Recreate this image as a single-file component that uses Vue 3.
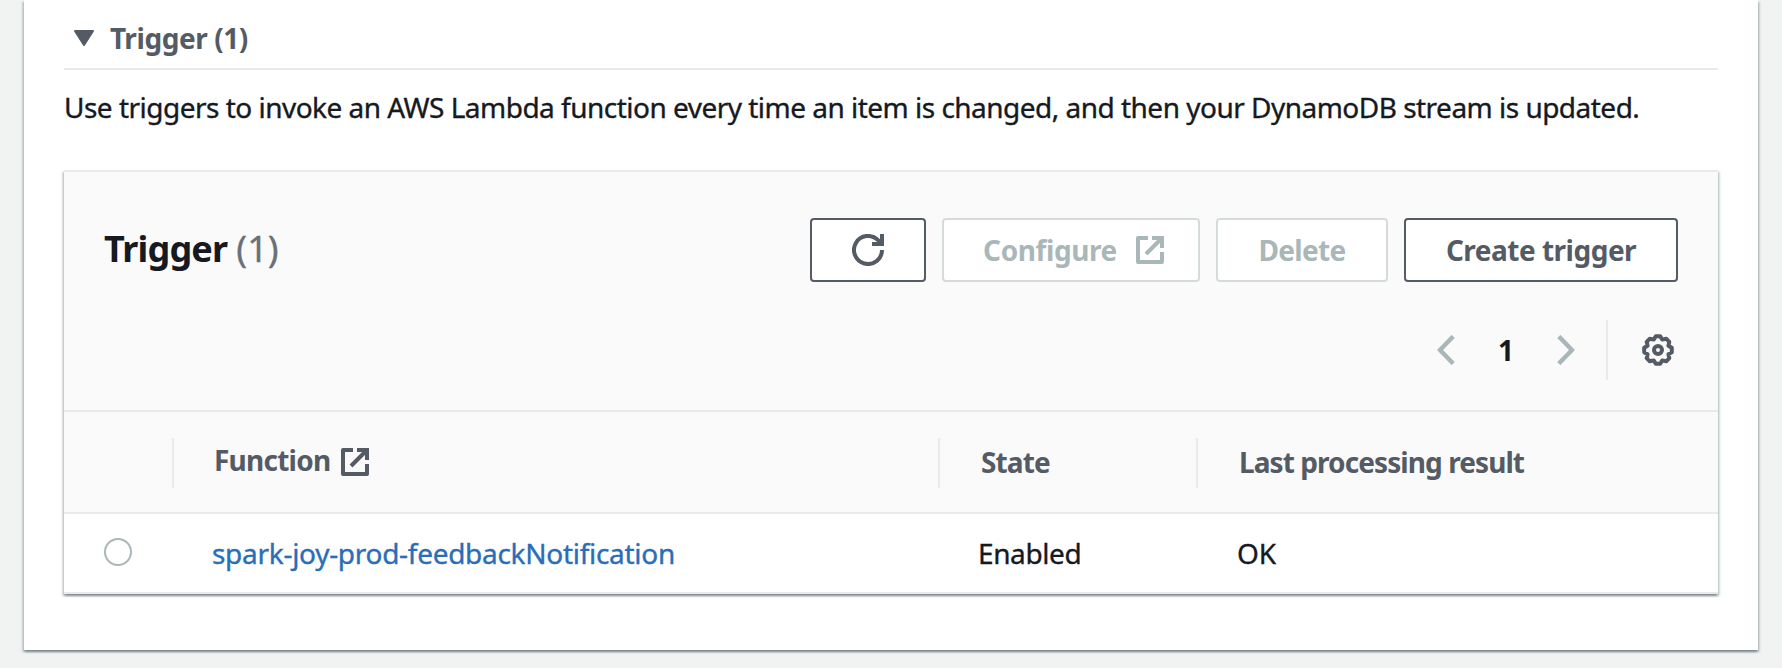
<script setup>
const columns = [
  { key: 'function', label: 'Function', external: true },
  { key: 'state', label: 'State' },
  { key: 'result', label: 'Last processing result' },
]
const rows = [{ function: 'spark-joy-prod-feedbackNotification', state: 'Enabled', result: 'OK' }]
</script>

<template>
  <main class="page">
    <section class="panel">
      <header class="expander">
        <svg class="caret" viewBox="0 0 20 16"><path d="M1 1h18L10 15z" fill="currentColor" stroke="currentColor" stroke-width="2" stroke-linejoin="round" /></svg>
        <span class="t-expander">Trigger (1)</span>
      </header>
      <p class="intro"><span class="t-intro">Use triggers to invoke an AWS Lambda function every time an item is changed, and then your DynamoDB stream is updated.</span></p>

      <div class="card">
        <div class="card-head">
          <div class="toolbar">
            <h2><span class="t-title">Trigger</span><span class="count">(1)</span></h2>
            <button class="btn refresh" aria-label="Refresh">
              <svg class="i32" viewBox="0 0 16 16" fill="none" stroke="currentColor" stroke-width="2"><path d="M15 8a7 7 0 1 1-2-4.9L14.8 5" /><path d="M10 5h5V0" /></svg>
            </button>
            <button class="btn configure" disabled>
              <span class="t-configure">Configure</span>
              <svg class="i28" viewBox="0 0 28 28" fill="none" stroke="currentColor" stroke-width="4"><path d="M12 2H2v24h24V16" stroke-linejoin="round" /><path d="M16 2h10v10" /><path d="M25 3L10 18" /></svg>
            </button>
            <button class="btn delete" disabled><span class="t-delete">Delete</span></button>
            <button class="btn create"><span class="t-create">Create trigger</span></button>
          </div>
          <div class="paging">
            <svg class="chev" viewBox="0 0 18 30" fill="none" stroke="currentColor" stroke-width="4.4"><path d="M16.2 1.4L3 15l13.2 13.6" /></svg>
            <span class="page-no">1</span>
            <svg class="chev" viewBox="0 0 18 30" fill="none" stroke="currentColor" stroke-width="4.4"><path d="M1.8 1.4L15 15 1.8 28.6" /></svg>
            <span class="rule"></span>
            <svg class="i32 gear" viewBox="-16 -16 32 32" fill="none" stroke="currentColor" stroke-width="4" stroke-linejoin="round"><path d="M-2.2 -13.8H2.2L4.2 -10.4 8.2 -11.3 11.3 -8.2 10.4 -4.2 13.8 -2.2V2.2L10.4 4.2 11.3 8.2 8.2 11.3 4.2 10.4 2.2 13.8H-2.2L-4.2 10.4 -8.2 11.3 -11.3 8.2 -10.4 4.2 -13.8 2.2V-2.2L-10.4 -4.2 -11.3 -8.2 -8.2 -11.3 -4.2 -10.4z" /><circle r="4" /></svg>
          </div>
        </div>
        <div class="grid thead">
          <div class="cell"></div>
          <div v-for="c in columns" :key="c.key" class="cell" :class="'h-' + c.key">
            <span>{{ c.label }}</span>
            <svg v-if="c.external" class="i28" viewBox="0 0 28 28" fill="none" stroke="currentColor" stroke-width="4"><path d="M12 2H2v24h24V16" stroke-linejoin="round" /><path d="M16 2h10v10" /><path d="M25 3L10 18" /></svg>
          </div>
        </div>
        <div v-for="r in rows" :key="r.function" class="grid row">
          <div class="cell pick"><span class="radio"></span></div>
          <div class="cell"><a class="t-link">{{ r.function }}</a></div>
          <div class="cell"><span class="t-state">{{ r.state }}</span></div>
          <div class="cell"><span class="t-ok">{{ r.result }}</span></div>
        </div>
      </div>
    </section>
  </main>
</template>

<style>
body { background: #f1f3f3; }
</style>
<style scoped>
* { box-sizing: border-box; }
.page { height: 668px; overflow: hidden; padding: 0 24px; background: #f1f3f3; font: 28px/38px "Noto Sans", sans-serif; color: #16191f; }
.panel { height: 650px; padding: 0 40px; background: #fff; box-shadow: 0 2px 2px rgba(0,28,36,.3), 2px 2px 2px rgba(0,28,36,.15), -2px 2px 2px rgba(0,28,36,.15); }
span, a { white-space: nowrap; }
.expander { height: 70px; padding: 6px 0 0 10px; display: flex; align-items: center; border-bottom: 2px solid #eaeaea; color: #545b64; font-weight: 700; }
.caret { width: 20px; height: 16px; margin: 2px 16px 0 0; }
.t-expander { letter-spacing: -.42px; margin-top: 1px; }
.intro { margin: 0 0 26px; line-height: 74px; height: 74px; }
.t-intro { letter-spacing: -.515px; }
.t-intro, .t-link, .t-state, .t-ok, .count { -webkit-text-stroke: .35px currentColor; }
.card { background: #fff; box-shadow: 0 2px 2px rgba(0,28,36,.3), 2px 2px 2px rgba(0,28,36,.15), -2px 2px 2px rgba(0,28,36,.15); border-top: 2px solid #eaeaea; }
.card-head { height: 240px; padding: 46px 40px 0; background: #fafafa; border-bottom: 2px solid #eaeaea; }
.toolbar { display: flex; gap: 16px; height: 64px; }
h2 { flex: 1; margin: 0; font-size: 36px; line-height: 62px; font-weight: 700; }
.t-title { letter-spacing: -.8px; }
.count { margin-left: 9px; font-weight: 400; color: #687078; }
.btn { display: flex; align-items: center; justify-content: center; height: 64px; padding: 0; margin: 0; border: 2px solid #545b64; border-radius: 4px; background: #fff; color: #545b64; font: 700 28px/38px "Noto Sans", sans-serif; }
.btn:disabled { color: #aab7b8; border-color: #d5dbdb; }
.refresh { width: 116px; }
.configure { width: 258px; gap: 19px; padding-left: 5px; }
.t-configure { letter-spacing: -.4px; }
.delete { width: 172px; }
.t-delete { letter-spacing: -.65px; }
.create { width: 274px; }
.t-create { letter-spacing: -.5px; }
svg { display: block; flex: none; }
.i32 { width: 32px; height: 32px; }
.i28 { width: 28px; height: 28px; }
.paging { display: flex; align-items: center; justify-content: flex-end; height: 60px; margin-top: 38px; padding-right: 4px; }
.chev { width: 18px; height: 30px; color: #aab7b8; }
.page-no { width: 102px; text-align: center; font-weight: 700; height: 40px; line-height: 40px; }
.rule { width: 2px; height: 60px; margin: 0 34px 0 31px; background: #eaeaea; }
.gear { color: #545b64; }
.grid { display: grid; grid-template-columns: 110px 766px 258px 1fr; align-items: center; border-bottom: 2px solid #eaeaea; }
.thead { height: 102px; padding-top: 2px; background: #fafafa; color: #545b64; font-weight: 700; }
.thead .cell { height: 50px; padding: 0 0 2px 41px; display: flex; align-items: center; border-right: 2px solid #eaeaea; }
.thead .cell:last-child { border-right: 0; }
.thead .h-function { padding-left: 40px; }
.thead .h-function span { margin: -4px 11px 0 0; letter-spacing: -.75px; }
.h-state span { letter-spacing: -.9px; }
.h-result span { letter-spacing: -.92px; }
.row { height: 80px; }
.row .cell { padding-left: 38px; }
.radio { display: block; width: 28px; height: 28px; border: 2px solid #aab7b8; border-radius: 50%; margin: -2px 0 0 2px; }
.t-link { color: #2a6db8; letter-spacing: -.29px; }
.t-state { letter-spacing: -.4px; }
.t-ok { margin-left: 1px; }
</style>
